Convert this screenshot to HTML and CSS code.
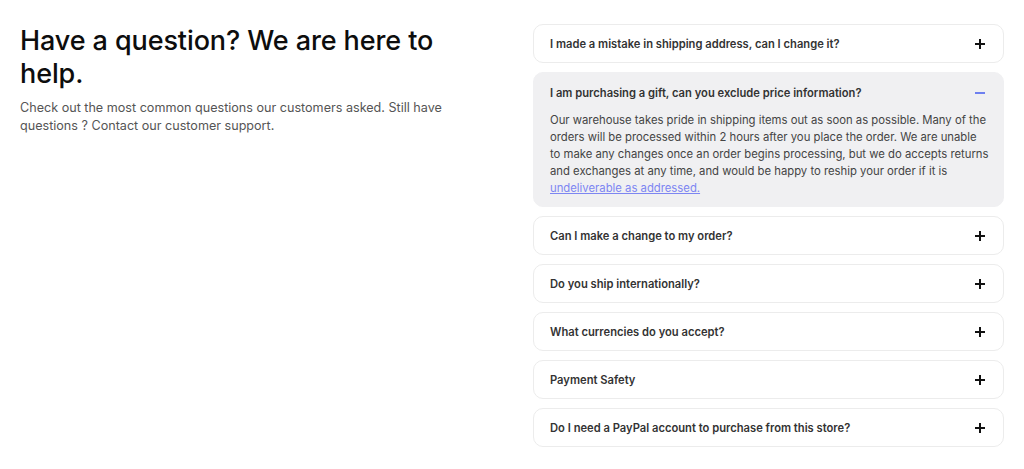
FILE: index.html
```html
<!DOCTYPE html>
<html lang="en">
<head>
<meta charset="utf-8">
<link rel="stylesheet" href="styles.css">
</head>
<body>
<main class="faq">
  <section class="intro">
    <h1 class="title">Have a question? We are here to help.</h1>
    <p class="lead">Check out the most common questions our customers asked. Still have questions ? Contact our customer support.</p>
  </section>
  <section class="list">
    <div class="item">
      <div class="q"><span>I made a mistake in shipping address, can I change it?</span><span class="icon plus"></span></div>
    </div>
    <div class="item open">
      <div class="q"><span>I am purchasing a gift, can you exclude price information?</span><span class="icon minus"></span></div>
      <p class="a">Our warehouse takes pride in shipping items out as soon as possible. Many of the orders will be processed within 2 hours after you place the order. We are unable to make any changes once an order begins processing, but we do accepts returns and exchanges at any time, and would be happy to reship your order if it is <a class="link" href="#">undeliverable as addressed.</a></p>
    </div>
    <div class="item">
      <div class="q"><span>Can I make a change to my order?</span><span class="icon plus"></span></div>
    </div>
    <div class="item">
      <div class="q"><span>Do you ship internationally?</span><span class="icon plus"></span></div>
    </div>
    <div class="item">
      <div class="q"><span>What currencies do you accept?</span><span class="icon plus"></span></div>
    </div>
    <div class="item">
      <div class="q"><span>Payment Safety</span><span class="icon plus"></span></div>
    </div>
    <div class="item">
      <div class="q"><span>Do I need a PayPal account to purchase from this store?</span><span class="icon plus"></span></div>
    </div>
  </section>
</main>
</body>
</html>
```

FILE: styles.css
```css
* { box-sizing: border-box; }
html, body { margin: 0; padding: 0; background: #fff; }
body { font-family: Inter, "Noto Sans", sans-serif; color: #111; }

.faq {
  display: flex;
  justify-content: space-between;
  padding: 24px 20px 0 20px;
}

.intro { width: 440px; }
.title {
  margin: 0;
  font-size: 27px;
  line-height: 33px;
  font-weight: 500;
  color: #0d0d0d;
  letter-spacing: -0.1px;
}
.lead {
  margin: 9px 0 0;
  font-size: 12.6px;
  line-height: 18px;
  color: #555;
}

.list {
  width: 471px;
  display: flex;
  flex-direction: column;
  gap: 9px;
}
.item {
  border: 1px solid #ececec;
  border-radius: 10px;
  background: #fff;
}
.item.open { background: #f0f0f2; border-color: #f0f0f2; }
.q {
  display: flex;
  justify-content: space-between;
  align-items: center;
  height: 37px;
  padding: 0 18px 0 16px;
  font-size: 11.2px;
  font-weight: 600;
  color: #333;
}
.item.open .q { height: 38px; padding-top: 1px; }
.icon { position: relative; width: 10px; height: 10px; flex: none; }
.icon::before, .plus::after {
  content: "";
  position: absolute;
  background: #111;
}
.icon::before { left: 0; top: 4px; width: 10px; height: 2px; }
.plus::after { left: 4px; top: 0; width: 2px; height: 10px; }
.minus::before { background: #6e80f0; }
.a {
  margin: 0;
  padding: 1px 13px 9px 16px;
  font-size: 11.3px;
  line-height: 17px;
  color: #444;
}
.link { color: #7d86f2; text-decoration: underline; }
```
